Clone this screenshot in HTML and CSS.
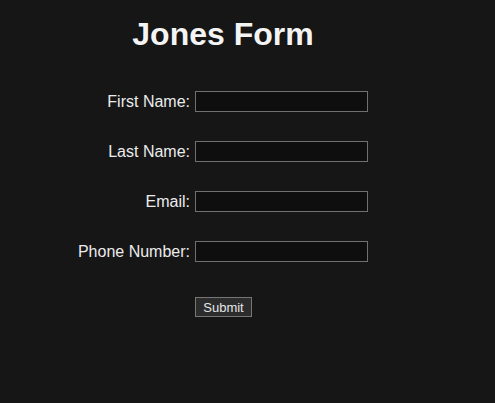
FILE: index.html
```html
<!DOCTYPE html>
<html>
<head>
<meta charset="utf-8">
<link rel="stylesheet" href="styles.css">
</head>
<body>
<div class="wrap">
  <h1 class="title">Jones Form</h1>
  <form class="form">
    <label class="label" for="fn">First Name:</label>
    <input class="field" id="fn" type="text">
    <label class="label" for="ln">Last Name:</label>
    <input class="field" id="ln" type="text">
    <label class="label" for="em">Email:</label>
    <input class="field" id="em" type="text">
    <label class="label" for="ph">Phone Number:</label>
    <input class="field" id="ph" type="text">
    <span></span>
    <div class="actions"><button class="submit" type="button">Submit</button></div>
  </form>
</div>
</body>
</html>
```

FILE: styles.css
```css
html, body {
  margin: 0;
  padding: 0;
  background: #161616;
  color: #f0f0f0;
  font-family: "Liberation Sans", Arial, sans-serif;
}
.wrap {
  width: 430px;
  padding: 16px 8px 0 8px;
}
.title {
  margin: 0;
  text-align: center;
  font-size: 32px;
  font-weight: bold;
  line-height: 37px;
  color: #f4f4f4;
}
.form {
  margin-top: 38px;
  display: grid;
  grid-template-columns: 182px 173px;
  column-gap: 5px;
  row-gap: 29px;
  align-items: center;
}
.label {
  text-align: right;
  font-size: 16px;
  color: #ececec;
}
.field {
  box-sizing: border-box;
  width: 173px;
  height: 21px;
  margin: 0;
  padding: 1px 2px;
  background: #0e0e0e;
  border: 1px solid #707070;
  border-radius: 0;
  color: #eee;
  font-family: inherit;
  font-size: 13px;
}
.actions {
  margin-top: 6px;
}
.submit {
  box-sizing: border-box;
  width: 57px;
  height: 20px;
  margin: 0;
  padding: 0;
  background: #2c2c2c;
  border: 1px solid #767676;
  border-radius: 0;
  color: #e6e6e6;
  font-family: inherit;
  font-size: 13px;
}
```
